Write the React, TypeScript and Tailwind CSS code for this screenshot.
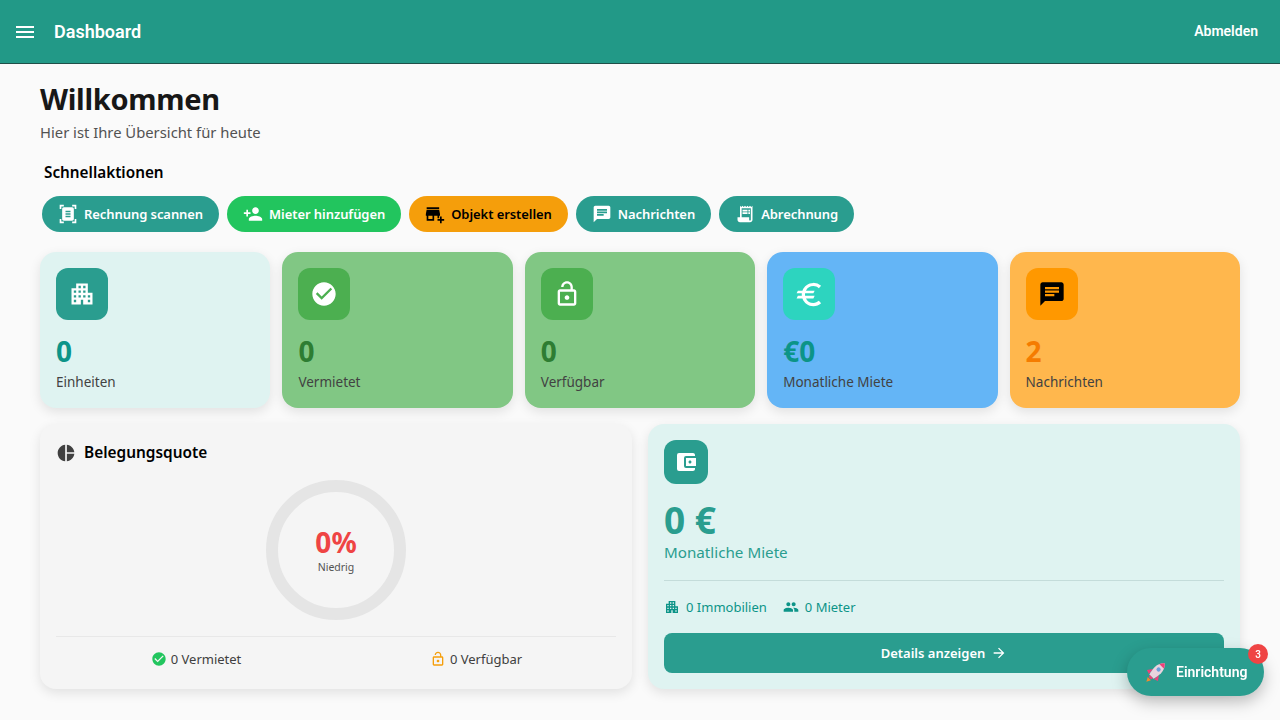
import type { ReactNode } from "react";
import {
  MdAccountBalanceWallet,
  MdAddBusiness,
  MdApartment,
  MdArrowForward,
  MdChat,
  MdCheckCircle,
  MdDocumentScanner,
  MdEuro,
  MdLockOpen,
  MdMenu,
  MdOutlineLockOpen,
  MdPeople,
  MdPersonAdd,
  MdPieChart,
  MdReceiptLong,
} from "react-icons/md";

const actions = [
  { label: "Rechnung scannen", Icon: MdDocumentScanner, tone: "bg-[#2a9d8f] text-white" },
  { label: "Mieter hinzufügen", Icon: MdPersonAdd, tone: "bg-[#22c55e] text-white" },
  { label: "Objekt erstellen", Icon: MdAddBusiness, tone: "bg-[#f59e0b] text-black" },
  { label: "Nachrichten", Icon: MdChat, tone: "bg-[#2a9d8f] text-white" },
  { label: "Abrechnung", Icon: MdReceiptLong, tone: "bg-[#2a9d8f] text-white" },
];

const stats = [
  { value: "0", label: "Einheiten", Icon: MdApartment, iconSize: "size-7", card: "bg-[#dff3f1]", box: "bg-[#2a9d8f] text-white", num: "text-[#0c9488]" },
  { value: "0", label: "Vermietet", Icon: MdCheckCircle, iconSize: "size-7", card: "bg-[#81c784]", box: "bg-[#4caf50] text-white", num: "text-[#2e7d32]" },
  { value: "0", label: "Verfügbar", Icon: MdOutlineLockOpen, iconSize: "size-7", card: "bg-[#81c784]", box: "bg-[#4caf50] text-white", num: "text-[#2e7d32]" },
  { value: "€0", label: "Monatliche Miete", Icon: MdEuro, iconSize: "size-[31px]", card: "bg-[#64b5f6]", box: "bg-[#2dd4bf] text-white", num: "text-[#0c9488]" },
  { value: "2", label: "Nachrichten", Icon: MdChat, iconSize: "size-7", card: "bg-[#ffb74d]", box: "bg-[#ff9800] text-black", num: "text-[#f57c00]" },
];

function RocketIcon() {
  return (
    <svg viewBox="0 0 24 24" className="size-[22px] shrink-0">
      <path d="M1.500 22.500 3 17.500l3.500 3.500z" fill="#f58a2c" />
      <g transform="rotate(45 12 12)">
        <path d="M7.500 12 3.500 17.500 8 19z" fill="#f0407a" />
        <path d="M16.500 12 20.500 17.500 16 19z" fill="#f0407a" />
        <path d="M12-1.500c3.200 3 4.800 6.500 4.800 10.500 0 3.500-.7 7-1.500 10H8.700c-.8-3-1.500-6.500-1.500-10 0-4 1.600-7.500 4.800-10.500z" fill="#e9d3de" />
        <path d="M12-1.500c1.600 1.500 2.800 3.100 3.600 4.800H8.400C9.200 1.600 10.400 0 12-1.500z" fill="#f0407a" />
        <path d="M9.500 19h5l-.7 2.500h-3.600z" fill="#f0407a" />
        <circle cx="12" cy="8" r="2.300" fill="#6d9fdc" />
      </g>
    </svg>
  );
}

function Pill({ children, tone }: { children: ReactNode; tone: string }) {
  return (
    <button
      className={`flex h-9 items-center gap-[6px] rounded-full px-4 text-[13px] font-semibold tracking-[-0.07px] ${tone}`}
    >
      {children}
    </button>
  );
}

export default function App() {
  return (
    <div className="min-h-[720px] bg-[#fafafa] font-['Noto_Sans','Open_Sans',sans-serif] text-[#171717]">
      <header className="flex h-16 items-center justify-between border-b border-[#1f4f48] bg-[#229987] pl-[13px] pr-[22px] text-white">
        <div className="flex items-center gap-[17px]">
          <MdMenu className="size-6" />
          <h1 className="font-['Roboto',sans-serif] text-[18px] font-semibold">Dashboard</h1>
        </div>
        <span className="font-['Roboto',sans-serif] text-[14px] font-semibold">Abmelden</span>
      </header>

      <main className="px-10 pt-[15px]">
        <h2 className="text-[29px] font-bold leading-10 tracking-[-0.3px]">Willkommen</h2>
        <p className="mt-[3px] text-[14.8px] leading-5 text-[#525252]">Hier ist Ihre Übersicht für heute</p>

        <h3 className="ml-1 mt-5 text-[15.3px] font-semibold leading-5 text-black">Schnellaktionen</h3>
        <div className="ml-[2px] mt-[14px] flex gap-2">
          {actions.map(({ label, Icon, tone }) => (
            <Pill key={label} tone={tone}>
              <Icon className="size-[20px]" />
              <span className="pt-px">{label}</span>
            </Pill>
          ))}
        </div>

        <div className="mt-5 grid grid-cols-5 gap-3">
          {stats.map(({ value, label, Icon, iconSize, card, box, num }) => (
            <div key={label} className={`h-[156px] rounded-2xl p-4 shadow-[0_4px_12px_rgba(0,0,0,0.1)] ${card}`}>
              <div className={`flex size-[52px] items-center justify-center rounded-xl ${box}`}>
                <Icon className={iconSize} />
              </div>
              <div className={`mt-[11px] text-[28px] font-bold leading-10 ${num}`}>{value}</div>
              <div className="mt-[1px] text-[13.5px] leading-5 text-[#424242]">{label}</div>
            </div>
          ))}
        </div>

        <div className="mt-4 grid grid-cols-2 gap-4">
          <section className="h-[265px] rounded-2xl bg-[#f5f5f5] p-4 shadow-[0_4px_12px_rgba(0,0,0,0.1)]">
            <div className="flex items-center gap-[8px]">
              <MdPieChart className="size-5 text-[#404040]" />
              <h3 className="pt-px text-[15.4px] font-semibold leading-6 text-black">Belegungsquote</h3>
            </div>
            <div className="mt-[15px] flex justify-center">
              <div className="flex size-[140px] flex-col items-center justify-center rounded-full border-[12px] border-[#e5e5e5]">
                <span className="mt-px text-[28px] font-bold leading-8 text-[#ef4444]">0%</span>
                <span className="mt-px text-[10.5px] leading-4 text-[#525252]">Niedrig</span>
              </div>
            </div>
            <div className="mt-4 grid grid-cols-2 border-t border-[#e8e8e8] pt-3">
              <div className="flex items-center justify-center gap-1 text-[13px] leading-5 text-[#404040]">
                <MdCheckCircle className="size-[16px] text-[#22c55e]" />0 Vermietet
              </div>
              <div className="flex items-center justify-center gap-1 text-[13px] leading-5 text-[#404040]">
                <MdLockOpen className="size-[16px] text-[#f59e0b]" />0 Verfügbar
              </div>
            </div>
          </section>

          <section className="h-[265px] rounded-2xl bg-[#dff3f1] p-4 shadow-[0_4px_12px_rgba(0,0,0,0.1)]">
            <div className="flex size-11 items-center justify-center rounded-xl bg-[#2a9d8f] text-white">
              <MdAccountBalanceWallet className="size-6" />
            </div>
            <div className="mt-[18px] text-[37px] font-bold leading-9 text-[#2a9d8f]">0 €</div>
            <div className="mt-[2px] text-[15.2px] leading-6 text-[#2a9d8f]">Monatliche Miete</div>
            <div className="mt-[16px] border-t border-[#c4dcda] pt-4">
              <div className="flex items-center gap-4 text-[13px] leading-5 text-[#0c9488]">
                <span className="flex items-center gap-[6px]">
                  <MdApartment className="size-4" />0 Immobilien
                </span>
                <span className="flex items-center gap-[6px]">
                  <MdPeople className="size-4" />0 Mieter
                </span>
              </div>
            </div>
            <button className="mt-4 flex h-10 w-full items-center justify-center gap-[6px] rounded-lg bg-[#2a9d8f] text-[13px] font-semibold text-white">
              <span className="pt-px">Details anzeigen</span>
              <MdArrowForward className="size-4" />
            </button>
          </section>
        </div>
      </main>

      <button className="fixed bottom-6 right-4 flex h-12 w-[137px] items-center gap-[9px] rounded-full bg-[#2a9d8f] pl-[18px] font-['Roboto',sans-serif] text-[14px] font-semibold text-white shadow-[0_6px_16px_rgba(0,0,0,0.25)]">
        <RocketIcon />
        Einrichtung
        <span className="absolute -right-[4px] -top-[4px] flex size-5 items-center justify-center rounded-full bg-[#ef4444] text-[10px] font-medium">
          3
        </span>
      </button>
    </div>
  );
}
